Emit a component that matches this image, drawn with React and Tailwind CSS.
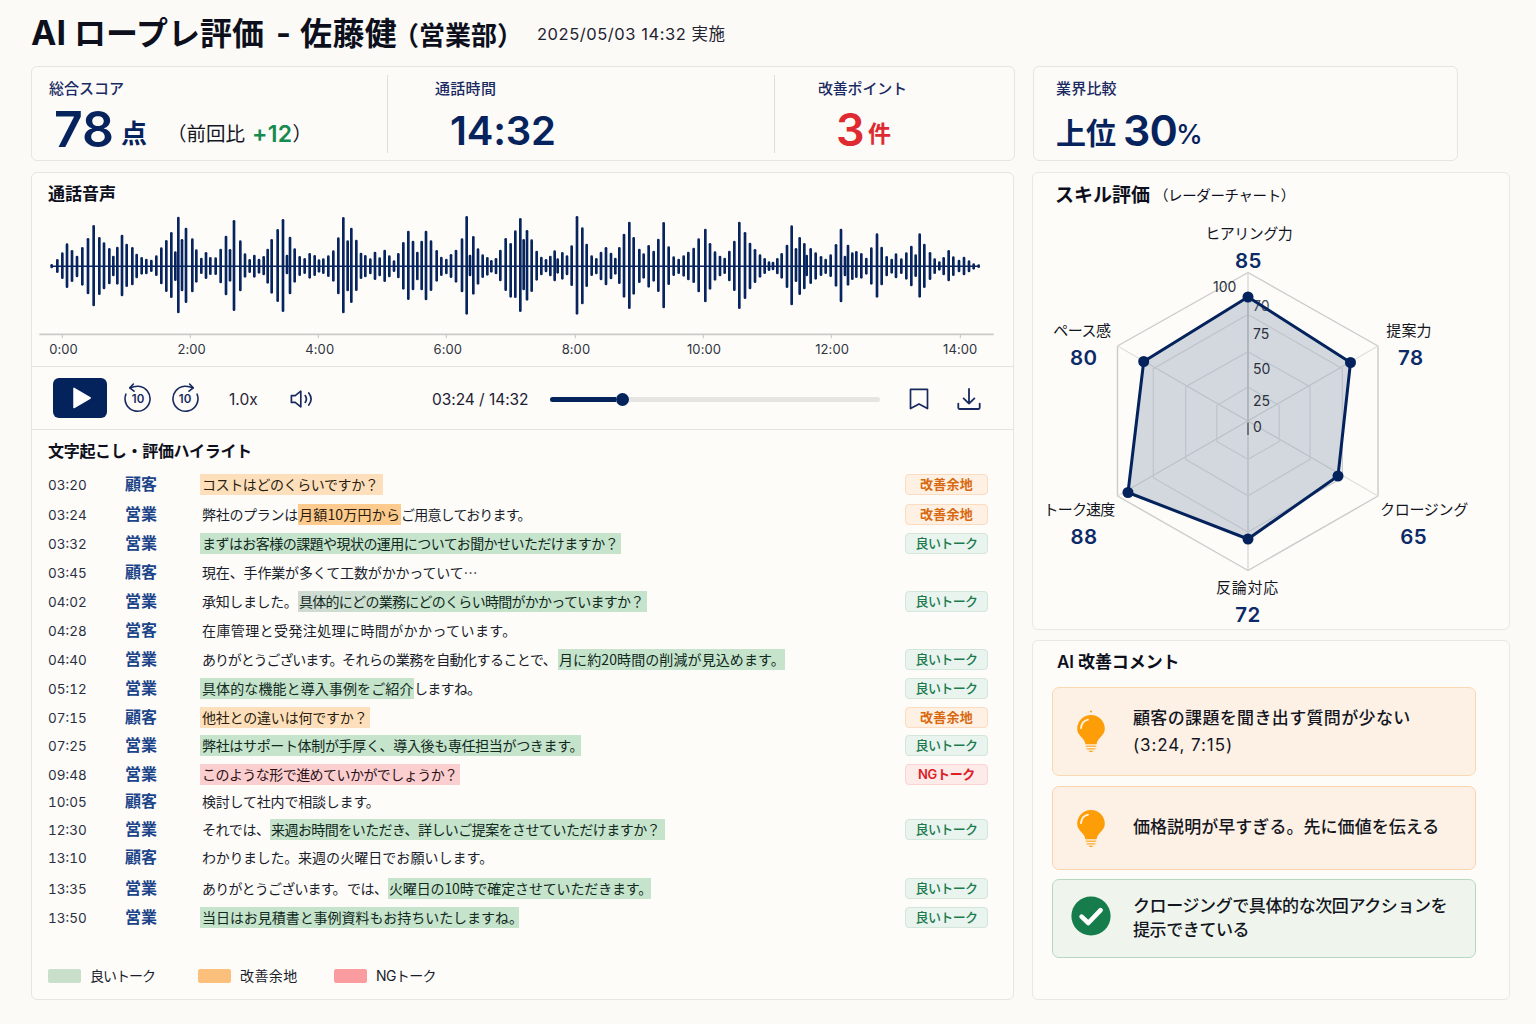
import clsx from 'clsx';

// x, top, bottom of every bar
const BARS = [
  [65, 286, 291], [82, 271, 305], [97, 251, 323], [111, 224, 350], [126, 244, 332], [141, 261, 318], [157, 235, 343],
  [174, 208, 369], [191, 169, 405], [208, 205, 371], [222, 221, 354], [238, 238, 339], [250, 261, 315], [262, 234, 340],
  [276, 198, 375], [290, 225, 347], [307, 235, 342], [320, 255, 321], [335, 265, 310], [349, 270, 309], [364, 273, 302],
  [379, 260, 314], [394, 236, 339], [409, 214, 362], [424, 190, 380], [436, 248, 329], [445, 144, 426], [456, 211, 360],
  [468, 177, 395], [487, 209, 363], [499, 242, 334], [514, 267, 308], [528, 250, 323], [541, 265, 311], [557, 266, 311],
  [572, 240, 336], [588, 201, 372], [600, 241, 331], [612, 154, 419], [631, 215, 360], [645, 254, 319], [659, 271, 305],
  [673, 258, 319], [687, 270, 307], [701, 262, 312], [713, 240, 337], [725, 211, 367], [743, 181, 392], [759, 151, 422],
  [771, 258, 309], [780, 204, 369], [794, 239, 334], [809, 262, 314], [824, 268, 308], [839, 253, 322], [854, 259, 314],
  [867, 272, 304], [880, 269, 308], [895, 260, 317], [910, 245, 331], [925, 206, 369], [940, 145, 426], [953, 215, 360],
  [964, 177, 395], [979, 213, 359], [993, 252, 323], [1006, 259, 318], [1021, 269, 309], [1035, 249, 326], [1049, 266, 315],
  [1064, 243, 332], [1078, 260, 318], [1092, 275, 302], [1105, 253, 321], [1120, 220, 355], [1135, 186, 386], [1149, 216, 357],
  [1162, 249, 327], [1175, 216, 357], [1188, 186, 387], [1203, 215, 359], [1220, 244, 331], [1234, 264, 314], [1249, 270, 309],
  [1263, 256, 320], [1278, 243, 334], [1296, 209, 363], [1310, 142, 430], [1320, 258, 315], [1330, 202, 370], [1344, 239, 340],
  [1358, 257, 320], [1372, 265, 313], [1384, 274, 304], [1398, 268, 309], [1411, 243, 330], [1427, 208, 359], [1442, 223, 379],
  [1456, 185, 380], [1471, 148, 422], [1481, 211, 357], [1491, 184, 388], [1505, 212, 362], [1520, 246, 328], [1534, 264, 312],
  [1548, 271, 303], [1561, 261, 315], [1574, 245, 330], [1583, 269, 307], [1597, 250, 325], [1611, 260, 312], [1625, 230, 344],
  [1641, 142, 430], [1657, 176, 399], [1670, 225, 347], [1685, 260, 314], [1699, 268, 309], [1713, 249, 327], [1728, 235, 342],
  [1743, 252, 324], [1756, 267, 310], [1768, 235, 338], [1782, 195, 379], [1798, 159, 413], [1811, 205, 370], [1828, 240, 335],
  [1841, 254, 322], [1856, 229, 349], [1871, 246, 331], [1885, 210, 362], [1901, 160, 411], [1916, 233, 341], [1931, 263, 314],
  [1946, 270, 308], [1961, 260, 316], [1975, 249, 327], [1991, 237, 335], [2006, 209, 363], [2026, 180, 393], [2040, 223, 355],
  [2055, 248, 328], [2070, 261, 315], [2084, 267, 308], [2098, 246, 330], [2113, 216, 359], [2128, 159, 413], [2145, 190, 383],
  [2160, 222, 354], [2175, 241, 335], [2190, 257, 319], [2204, 268, 308], [2217, 278, 299], [2229, 279, 297], [2242, 268, 309],
  [2255, 253, 322], [2271, 228, 350], [2285, 170, 402], [2298, 238, 332], [2309, 205, 371], [2323, 223, 354], [2330, 258, 315],
  [2342, 238, 338], [2357, 251, 325], [2373, 262, 314], [2387, 270, 308], [2402, 257, 317], [2418, 226, 346], [2433, 180, 393],
  [2445, 261, 315], [2454, 228, 343], [2467, 251, 326], [2479, 247, 320], [2494, 253, 322], [2509, 267, 310], [2524, 236, 340],
  [2541, 194, 379], [2555, 234, 342], [2570, 262, 315], [2585, 270, 307], [2598, 254, 321], [2614, 269, 308], [2629, 251, 325],
  [2644, 231, 345], [2657, 257, 317], [2669, 194, 379], [2683, 225, 350], [2700, 250, 326], [2714, 269, 308], [2728, 278, 298],
  [2741, 265, 312], [2756, 244, 330], [2770, 263, 314], [2787, 273, 303], [2802, 264, 312], [2817, 275, 303], [2831, 284, 295],
  [2846, 287, 290],
];

const TIMES = ['0:00', '2:00', '4:00', '6:00', '8:00', '10:00', '12:00', '14:00'];

const GOOD = 'bg-[#c6e3cb] text-[#10291d]';
const WARN = 'bg-[#fde0bb] text-[#2b1c10]';
const WARN_DEEP = 'bg-[#fbca8c] text-[#2b1c10]';
const NG = 'bg-[#fbced0] text-[#2b1215]';

// parts: [text, tracking, highlight, box width]
const ROWS = [
  { time: '03:20', who: '顧客', gap: '', tag: 'warn', parts: [['コストはどのくらいですか？', 'tracking-[-0.4px]', WARN, 'w-[183px]']] },
  { time: '03:24', who: '営業', gap: 'mt-[9px]', tag: 'warn', parts: [['弊社のプランは', 'tracking-[-0.3px]', '', 'w-[96px]'], ['月額10万円から', 'tracking-[0.2px]', WARN_DEEP, 'w-[103px]'], ['ご用意しております。', 'tracking-[-0.8px]', '', '']] },
  { time: '03:32', who: '営業', gap: 'mt-[8px]', tag: 'good', parts: [['まずはお客様の課題や現状の運用についてお聞かせいただけますか？', 'tracking-[-0.55px]', GOOD, 'w-[421px]']] },
  { time: '03:45', who: '顧客', gap: 'mt-[8px]', parts: [['現在、手作業が多くて工数がかかっていて…', 'tracking-[-0.15px]', '', '']] },
  { time: '04:02', who: '営業', gap: 'mt-[8px]', tag: 'good', parts: [['承知しました。', 'tracking-[-0.36px]', '', 'w-[96px]'], ['具体的にどの業務にどのくらい時間がかかっていますか？', 'tracking-[-0.72px]', 'bg-linear-to-r from-[#d0dad3] to-[#c6e3cb] to-40% text-[#10291d]', 'w-[349px]']] },
  { time: '04:28', who: '営客', gap: 'mt-[8px]', parts: [['在庫管理と受発注処理に時間がかかっています。', 'tracking-[0.4px]', '', '']] },
  { time: '04:40', who: '営業', gap: 'mt-[8px]', tag: 'good', parts: [['ありがとうございます。', 'tracking-[-1.1px]', '', 'w-[140px]'], ['それらの業務を自動化することで、', 'tracking-[-0.55px]', '', 'w-[216px]'], ['月に約20時間の削減が見込めます。', 'tracking-[0.1px]', GOOD, 'w-[227px]']] },
  { time: '05:12', who: '営業', gap: 'mt-[8px]', tag: 'good', parts: [['具体的な機能と導入事例をご紹介', 'tracking-[0.1px]', GOOD, 'w-[214px]'], ['しますね。', 'tracking-[-0.7px]', '', '']] },
  { time: '07:15', who: '顧客', gap: 'mt-[8px]', tag: 'warn', parts: [['他社との違いは何ですか？', 'tracking-[-0.2px]', WARN, 'w-[170px]']] },
  { time: '07:25', who: '営業', gap: 'mt-[7px]', tag: 'good', parts: [['弊社はサポート体制が手厚く、導入後も専任担当がつきます。', 'tracking-[-0.34px]', GOOD, 'w-[381px]']] },
  { time: '09:48', who: '営業', gap: 'mt-[8px]', tag: 'ng', parts: [['このような形で進めていかがでしょうか？', 'tracking-[-0.55px]', NG, 'w-[260px]']] },
  { time: '10:05', who: '顧客', gap: 'mt-[6px]', parts: [['検討して社内で相談します。', 'tracking-[-0.2px]', '', '']] },
  { time: '12:30', who: '営業', gap: 'mt-[7px]', tag: 'good', parts: [['それでは、', 'tracking-[-0.4px]', '', 'w-[68px]'], ['来週お時間をいただき、詳しいご提案をさせていただけますか？', 'tracking-[-0.55px]', GOOD, 'w-[395px]']] },
  { time: '13:10', who: '顧客', gap: 'mt-[7px]', parts: [['わかりました。', 'tracking-[-0.3px]', '', 'w-[96px]'], ['来週の火曜日でお願いします。', 'tracking-[0.05px]', '', '']] },
  { time: '13:35', who: '営業', gap: 'mt-[10px]', tag: 'good', parts: [['ありがとうございます。', 'tracking-[-0.8px]', '', 'w-[145px]'], ['では、', 'tracking-[-0.5px]', '', 'w-[41px]'], ['火曜日の10時で確定させていただきます。', 'tracking-[-0.15px]', GOOD, 'w-[263px]']] },
  { time: '13:50', who: '営業', gap: 'mt-[8px]', tag: 'good', parts: [['当日はお見積書と事例資料もお持ちいたしますね。', 'tracking-[-0.05px]', GOOD, 'w-[319px]']] },
];

const TAGS = {
  good: { label: '良いトーク', cls: 'border-[#d3e6da] bg-[#eaf4ee] text-[#1b7a4e] font-medium tracking-[-0.6px]' },
  warn: { label: '改善余地', cls: 'border-[#fbdcc0] bg-[#fef0e2] text-[#d9690f] font-semibold tracking-[0.3px]' },
  ng: { label: 'NGトーク', cls: 'border-[#fbd3d3] bg-[#fdebea] text-[#dc2026] font-semibold tracking-[-0.3px]' },
};

const LEGEND = [
  { label: '良いトーク', color: 'bg-[#c8dfca]', width: 'w-[150px]', tracking: 'tracking-[-1px]' },
  { label: '改善余地', color: 'bg-[#fcc07c]', width: 'w-[136px]', tracking: 'tracking-[0.4px]' },
  { label: 'NGトーク', color: 'bg-[#fb9da0]', width: 'w-[140px]', tracking: 'tracking-[-0.6px]' },
];

const RINGS = [
  '1248,387 1279.3,405.5 1279.3,441.5 1248,459.3 1216.7,441.5 1216.7,405.5',
  '1248,351.7 1310,386.7 1310,459.3 1248,495.7 1185.7,459.3 1185.7,386.7',
  '1248,314.5 1342.3,368.7 1342.3,477.7 1248,532 1153.3,477.7 1153.3,368.7',
];

const POINTS = [[1248, 297], [1350.5, 362.5], [1338, 476], [1248, 539], [1128, 492.5], [1143.7, 361.5]];

const AXES = [
  { name: 'ヒアリング力', x: 1248.7, y: 239, score: 85, sx: 1248.3, sy: 268, sp: -0.5 },
  { name: '提案力', x: 1409, y: 336, score: 78, sx: 1410.7, sy: 364.5, sp: 0.1 },
  { name: 'クロージング', x: 1424, y: 515, score: 65, sx: 1413.7, sy: 544, sp: -0.3 },
  { name: '反論対応', x: 1247.5, y: 593, score: 72, sx: 1248, sy: 622, sp: 0.7 },
  { name: 'トーク速度', x: 1079, y: 515, score: 88, sx: 1084, sy: 544, sp: -0.8 },
  { name: 'ペース感', x: 1082, y: 336, score: 80, sx: 1083.7, sy: 364.5, sp: -0.5 },
];

const SCALE = [['75', 339], ['50', 374], ['25', 406], ['0', 432]];

function Waveform() {
  return (
    <svg className="block w-[981px] h-[135px]" viewBox="6 126 2943 405" fill="none" stroke="#08245f">
      <path d="M65 289H2846" strokeWidth="4.5" />
      {BARS.map(([x, top, bottom]) => (
        <path key={x} d={`M${x} ${top}V${bottom}`} strokeWidth="8" strokeLinecap="round" />
      ))}
      <path d="M28 493H2891" stroke="#c9c9c7" strokeWidth="5" />
      {[97, 481, 865, 1249, 1636, 2020, 2404, 2791].map((x) => (
        <path key={x} d={`M${x} 493v12`} stroke="#c9c9c7" strokeWidth="3.5" />
      ))}
    </svg>
  );
}

function SkipIcon({ forward }) {
  return (
    <svg className="w-[30px] h-[34px] shrink-0" viewBox="0 0 30 34" fill="none" stroke="#17295f" strokeWidth="1.6" strokeLinecap="round" strokeLinejoin="round">
      <g transform={forward ? 'translate(30 0) scale(-1 1)' : undefined}>
        <path d="M2.9 15.2A12.5 12.5 0 1 0 15.4 7.3Q11 7.1 7 8.9" />
        <path d="M10.4 5 6.8 8.9 11 12.2" />
      </g>
      <text x="15" y="24" textAnchor="middle" fontSize="11.5" fontWeight="600" fill="#17295f" stroke="none">10</text>
    </svg>
  );
}

function Player() {
  return (
    <div className="flex items-center h-[64px] border-y border-[#e4e3e0] pl-[21px]">
      <button className="flex items-center justify-center w-[54px] h-10 rounded-[6px] bg-[#04225c]">
        <svg className="w-5 h-6 ml-[3px]" viewBox="0 0 20 24" fill="#fff" stroke="#fff" strokeWidth="1.5" strokeLinejoin="round">
          <path d="M2 2.4V21.6L18.2 12z" />
        </svg>
      </button>
      <div className="flex gap-[17px] ml-4 mb-[5px]">
        <SkipIcon />
        <SkipIcon forward />
      </div>
      <span className="w-[61px] ml-[29px] mt-[3px] text-[15.5px] text-[#1f2436]">1.0x</span>
      <svg className="w-6 h-5 shrink-0 mt-[2px]" viewBox="0 0 24 20" fill="none" stroke="#17295f" strokeWidth="1.7" strokeLinejoin="round" strokeLinecap="round">
        <path d="M1.4 6.6h3.8L10.8 2.2V17.8L5.2 13.4H1.4z" />
        <path d="M15.2 6.6Q17.6 10 15.2 13.4M18.8 4Q23.4 10 18.8 16" />
      </svg>
      <span className="w-[118px] ml-[118px] mt-[4px] text-[15.5px] tracking-[-0.05px] whitespace-nowrap text-[#1b2033]">03:24 / 14:32</span>
      <div className="flex items-center w-[330px] h-[5px] mt-[3px] rounded-full bg-[#e6e5e2]">
        <div className="w-[66px] h-[5px] rounded-l-full bg-[#04225c]" />
        <div className="size-[13px] rounded-full bg-[#04225c]" />
      </div>
      <svg className="w-5 h-6 ml-[29px] mt-px" viewBox="0 0 20 24" fill="none" stroke="#17295f" strokeWidth="1.7" strokeLinejoin="round">
        <path d="M1.5 2.4h17v19.2L10 16.9l-8.5 4.700z" />
      </svg>
      <svg className="w-6 h-6 ml-[28px] mt-[2px]" viewBox="0 0 24 24" fill="none" stroke="#17295f" strokeWidth="1.8" strokeLinejoin="round" strokeLinecap="round">
        <path d="M12 2v14.6M6.6 11.4 12 16.6l5.4-5.2M1.3 16.6v4.2q0 1.2 1.2 1.2h19q1.2 0 1.2-1.2v-4.2" />
      </svg>
    </div>
  );
}

function Row({ row }) {
  const tag = TAGS[row.tag];
  return (
    <div className={clsx('flex items-center h-[21px]', row.gap)}>
      <span className="w-[77px] pt-[3px] text-[13.5px] tabular-nums text-[#2a3042]">{row.time}</span>
      <span className="w-[75px] pb-px text-[16px] font-semibold text-[#1c4489]">{row.who}</span>
      <p className="flex flex-1 text-[14px] leading-[21px] whitespace-nowrap text-[#1a1d2b] font-['Noto_Sans_CJK_JP',sans-serif]">
        {row.parts.map(([text, tracking, highlight, width], i) => (
          <span
            key={i}
            className={clsx(tracking, highlight, width, highlight && i > 0 && 'pl-[1px]', i === 0 && (highlight ? 'pl-[2px]' : 'ml-[2px]'))}
          >
            {text}
          </span>
        ))}
      </p>
      {tag && (
        <span className={clsx('flex items-center justify-center w-[83px] h-[21px] mr-[25px] border rounded-[4px] text-[13px]', tag.cls)}>
          {tag.label}
        </span>
      )}
    </div>
  );
}

function Radar() {
  return (
    <svg className="block w-[476px] h-[411px]" viewBox="1033 217 476 411" fill="none">
      <g stroke="#d4d4d2" strokeWidth="1.2">
        <path d="M1248 272.5 1378 346V496L1248 570.5 1117.5 496V346z" stroke="#cbcbc9" strokeWidth="1.4" strokeLinejoin="round" />
        <path d="M1117.5 346 1378 496M1378 346 1117.5 496" stroke="#e0e0dd" />
        <path d="M1248 272.5V570.5" />
      </g>
      <text x="1253" y="311" fontSize="14" fill="#4a4f5c">70</text>
      <polygon points={POINTS.join(' ')} fill="#04275c" fillOpacity="0.17" />
      <g stroke="#bfc4cb" strokeWidth="1.2">
        {RINGS.map((p) => <polygon key={p} points={p} />)}
      </g>
      <path d="M1248 297V421" stroke="#a9adb5" strokeWidth="1.2" />
      <path d="M1248 422.5V435" stroke="#3a3f4c" strokeWidth="1.2" />
      <polygon points={POINTS.join(' ')} stroke="#04225c" strokeWidth="3" strokeLinejoin="round" />
      {POINTS.map(([x, y]) => <circle key={x + y} cx={x} cy={y} r="5.5" fill="#04225c" />)}
      <g fontSize="14" fill="#2c303c">
        <text x="1213" y="292">100</text>
        {SCALE.map(([t, y]) => <text key={t} x="1253" y={y}>{t}</text>)}
      </g>
      {AXES.map((a) => (
        <g key={a.name} textAnchor="middle">
          <text x={a.x} y={a.y} fontSize="15" letterSpacing={a.sp} fill="#14161f">{a.name}</text>
          <text x={a.sx} y={a.sy} fontSize="20.5" fontWeight="600" letterSpacing="0.4" fill="#0c2a68">{a.score}</text>
        </g>
      ))}
    </svg>
  );
}

function Bulb({ spark }) {
  return (
    <svg className={clsx('w-10 h-[44px]', !spark && 'mb-[3px]')} viewBox="0 0 40 44" fill="#fd9d08">
      {spark && <circle cx="20" cy="1.6" r="1" />}
      <path d="M20 5A13.8 13.8 0 0 0 6.2 18.8C6.2 26 13.6 27.5 14.4 34.2H25.6C26.4 27.5 33.8 26 33.8 18.8A13.8 13.8 0 0 0 20 5z" />
      <path d="M10 18.2Q10.6 11 17 9.6" fill="none" stroke="#fff3dc" strokeWidth="1.8" strokeLinecap="round" />
      <rect x="14.6" y="35.4" width="10.8" height="1.6" rx=".8" opacity=".7" />
      <rect x="15.4" y="38.2" width="9.2" height="1.4" rx=".7" opacity=".8" />
      <path d="M17.4 40.8h5.2q-2.6 2.6-5.2 0z" />
    </svg>
  );
}

function CheckBadge() {
  return (
    <svg className="size-10 mb-[5px]" viewBox="0 0 40 40" fill="none">
      <circle cx="20" cy="20" r="19.6" fill="#167c4c" />
      <path d="M10.6 20.6 17.3 27 29.6 14.2" stroke="#fff" strokeWidth="4.6" strokeLinecap="round" strokeLinejoin="round" />
    </svg>
  );
}

function Comment({ icon, className, children }) {
  return (
    <div className={clsx('flex items-center w-[424px] pl-[18px] border-[1.5px] rounded-[7px] text-[17px] font-medium whitespace-nowrap text-[#14161f]', className)}>
      {icon}
      <div className="ml-[22px]">{children}</div>
    </div>
  );
}

export default function App() {
  return (
    <div className="w-[1536px] h-[1024px] overflow-hidden bg-[#fbfaf6] px-[31px] font-['Inter','Noto_Sans_CJK_JP',sans-serif] leading-none text-[#0d101c]">
      <header className="flex items-start h-[66px] pt-[16px] whitespace-nowrap">
        <h1 className="flex items-baseline text-[32px] font-bold">
          <span className="w-[43px] text-[34px]">AI</span>
          <span className="w-[202px]">ロープレ評価</span>
          <span className="w-[24px]">-</span>
          <span className="w-[93px] tracking-[0.4px]">佐藤健</span>
          <span className="w-[144px] text-[26px]">（営業部）</span>
        </h1>
        <p className="mt-[10px] text-[16.5px] tracking-[0.55px] text-[#1f2230]">2025/05/03 14:32 実施</p>
      </header>

      <div className="flex gap-[18px] h-[95px]">
        <section className="flex items-center w-[984px] border border-[#e6e5e1] rounded-[6px] bg-[#fcfbf8] text-[#06235d]">
          <div className="w-[356px] h-[78px] pl-[17px] pt-[6px] border-r border-[#dfdedb]">
            <h2 className="text-[15px] font-medium text-[#1a2a62]">総合スコア</h2>
            <div className="flex items-center mt-[8px] ml-[5px] whitespace-nowrap">
              <span className="w-[67px] text-[50px] font-semibold">78</span>
              <span className="mt-[11px] text-[26px] font-bold">点</span>
              <span className="mt-[13px] ml-[20px] text-[19.5px] text-[#14161f]">（前回比</span>
              <span className="mt-[11px] ml-[7px] text-[23px] font-semibold tracking-[0.3px] text-[#178a50]">+12</span>
              <span className="mt-[13px] text-[19.5px] text-[#14161f]">）</span>
            </div>
          </div>
          <div className="w-[387px] h-[78px] pl-[47px] pt-[6px] border-r border-[#dfdedb]">
            <h2 className="text-[15px] font-medium tracking-[0.3px] text-[#1a2a62]">通話時間</h2>
            <p className="mt-[15px] ml-[15px] text-[40px] font-semibold tracking-[-0.2px]">14:32</p>
          </div>
          <div className="h-[78px] pl-[43px] pt-[6px]">
            <h2 className="text-[15px] font-medium tracking-[-0.2px] text-[#1a2a62]">改善ポイント</h2>
            <div className="flex items-center mt-[11px] ml-[18px] text-[#de2a30]">
              <span className="w-[32px] text-[45px] font-semibold">3</span>
              <span className="mt-[11px] text-[23px] font-bold">件</span>
            </div>
          </div>
        </section>
        <section className="w-[425px] pl-[22px] pt-[14px] border border-[#e6e5e1] rounded-[6px] bg-[#fcfbf8] text-[#06235d]">
          <h2 className="text-[15px] font-medium tracking-[0.2px] text-[#1a2a62]">業界比較</h2>
          <div className="flex items-center mt-[13px]">
            <span className="w-[67px] mt-[5px] text-[30px] font-bold">上位</span>
            <span className="w-[53px] text-[43px] font-semibold tracking-[-0.8px]">30</span>
            <span className="mt-[8px] text-[27px] font-medium">%</span>
          </div>
        </section>
      </div>

      <div className="flex gap-[18px] mt-[11px]">
        <main className="w-[983px] h-[828px] border border-[#e6e5e1] rounded-[6px] bg-[#fdfcf9]">
          <h2 className="h-[39px] pl-[16px] pt-[13px] text-[17px] font-semibold">通話音声</h2>
          <Waveform />
          <div className="flex h-[23px] -mt-1 -ml-[32.5px] text-[13px] text-[#30343f]">
            {TIMES.map((t) => (
              <span key={t} className="w-[128.1px] shrink-0 text-center tracking-[0.1px]">{t}</span>
            ))}
          </div>
          <Player />
          <section className="pl-[16px]">
            <h2 className="h-[44px] pt-[13px] text-[16px] tracking-[-0.3px] font-semibold">文字起こし・評価ハイライト</h2>
            {ROWS.map((row) => <Row key={row.time} row={row} />)}
            <div className="flex mt-[41px]">
              {LEGEND.map((l) => (
                <div key={l.label} className={clsx('flex items-center', l.width)}>
                  <span className={clsx('w-[33px] h-[14px] rounded-[2px]', l.color)} />
                  <span className={clsx('ml-[9px] text-[14px] text-[#1a1d2b]', l.tracking)}>{l.label}</span>
                </div>
              ))}
            </div>
          </section>
        </main>

        <aside className="flex flex-col gap-[10px]">
          <section className="w-[478px] h-[458px] border border-[#e9e8e4] rounded-[6px] bg-[#fdfcf9]">
            <h2 className="flex items-center h-[44px] pl-[22px] text-[19px] font-semibold whitespace-nowrap">
              スキル評価
              <span className="mt-[3px] ml-[4px] text-[14.5px] font-normal tracking-[-0.4px]">（レーダーチャート）</span>
            </h2>
            <Radar />
          </section>
          <section className="w-[478px] h-[360px] pl-[19px] border border-[#e9e8e4] rounded-[6px] bg-[#fdfcf9]">
            <h2 className="h-[46px] pl-[5px] pt-[13px] text-[17px] font-semibold tracking-[-0.1px]">AI 改善コメント</h2>
            <Comment icon={<Bulb spark />} className="h-[89px] border-[#fbd9b0] bg-[#fdf1e5] leading-[27px] tracking-[0.35px]">
              <p>顧客の課題を聞き出す質問が少ない</p>
              <p className="font-normal tracking-[0.9px]">(3:24, 7:15)</p>
            </Comment>
            <Comment icon={<Bulb />} className="h-[84px] mt-[10px] border-[#fbd3ae] bg-[#fdf1e5]">
              <p className="pb-[2px] tracking-[0.05px]">価格説明が早すぎる。先に価値を伝える</p>
            </Comment>
            <Comment icon={<CheckBadge />} className="h-[79px] mt-[9px] border-[#b4d9c0] bg-[#eff5ec] leading-[24px] tracking-[-0.4px]">
              <p>クロージングで具体的な次回アクションを</p>
              <p className="pb-px">提示できている</p>
            </Comment>
          </section>
        </aside>
      </div>
    </div>
  );
}
